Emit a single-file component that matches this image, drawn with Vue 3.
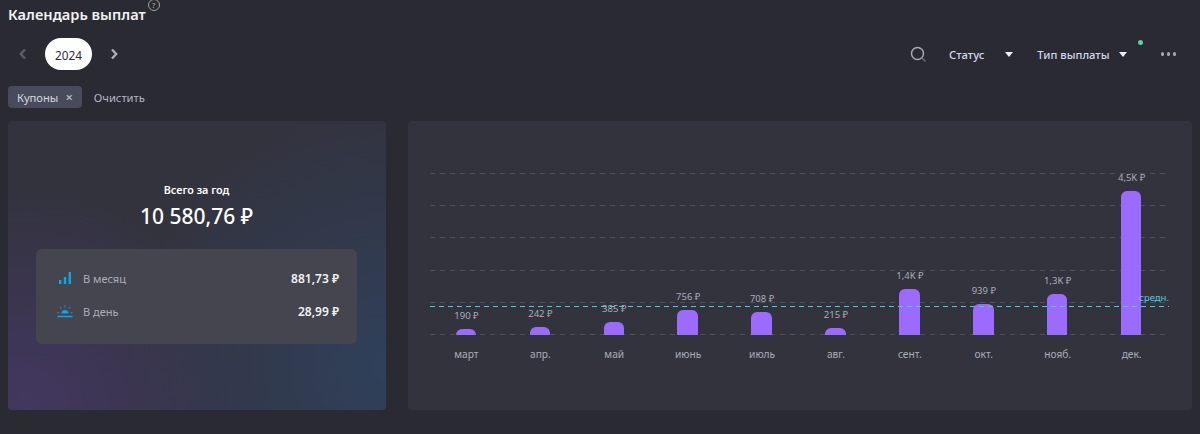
<template>
  <div class="page">
    <div class="title-row">
      <h1 class="title">Календарь выплат</h1>
      <span class="help">?</span>
    </div>

    <div class="toolbar">
      <div class="years">
        <svg class="chev" width="10" height="12" viewBox="0 0 10 12"><path d="M7 1.5 2.8 6 7 10.5" fill="none" stroke="#5b5e69" stroke-width="2.4"/></svg>
        <button class="year">2024</button>
        <svg class="chev" width="10" height="12" viewBox="0 0 10 12"><path d="M3 1.5 7.2 6 3 10.5" fill="none" stroke="#a9acb6" stroke-width="2.4"/></svg>
      </div>
      <div class="filters">
        <svg class="search" width="17" height="17" viewBox="0 0 17 17">
          <circle cx="7.5" cy="7.5" r="6" fill="none" stroke="#a8a9b0" stroke-width="1.5"/>
          <path d="M12 12 15.5 15.5" stroke="#6d6e77" stroke-width="1.5"/>
        </svg>
        <div class="filter status">Статус <i class="caret"></i></div>
        <div class="filter kind">Тип выплаты <i class="caret"></i><span class="dot"></span></div>
        <div class="more"><i></i><i></i><i></i></div>
      </div>
    </div>

    <div class="chips">
      <span class="chip">Купоны <span class="chip-x">×</span></span>
      <span class="clear">Очистить</span>
    </div>

    <div class="cards">
      <section class="card summary">
        <div class="sum-label">Всего за год</div>
        <div class="sum-value">10 580,76 ₽</div>
        <div class="stats">
          <div class="stat">
            <svg class="stat-icon" width="14" height="12" viewBox="0 0 14 12">
              <rect x="1" y="8" width="2.4" height="4" fill="#0ea5e9"/>
              <rect x="5.8" y="5" width="2.4" height="7" fill="#0ea5e9"/>
              <rect x="10.6" y="0" width="2.4" height="12" fill="#0ea5e9"/>
            </svg>
            <span class="stat-name">В месяц</span>
            <b class="stat-value">881,73 ₽</b>
          </div>
          <div class="stat">
            <svg class="stat-icon" width="16" height="14" viewBox="0 0 16 14">
              <path d="M4.5 9.5a3.5 3.5 0 0 1 7 0z" fill="#0ea5e9"/>
              <path d="M0.5 12.5h15" stroke="#0ea5e9" stroke-width="1.6"/>
              <path d="M8 1v2.4M3 3l1.4 1.6M13 3l-1.4 1.6M.5 8.6h2M13.5 8.6h2" stroke="#2f7ba8" stroke-width="1.2"/>
            </svg>
            <span class="stat-name">В день</span>
            <b class="stat-value">28,99 ₽</b>
          </div>
        </div>
      </section>

      <section class="card chart-card">
        <div class="chart">
          <div class="lines">
            <i v-for="n in 6" :key="n"></i>
          </div>
          <div class="bars">
            <div class="col" v-for="m in months" :key="m.name">
              <span class="bar-label">{{ m.label }}</span>
              <div class="bar" :style="{ height: m.h + 'px' }"></div>
              <span class="month">{{ m.name }}</span>
            </div>
          </div>
          <div class="avg"><span>средн.</span></div>
        </div>
      </section>
    </div>
  </div>
</template>

<script setup>
const months = [
  { name: 'март', label: '190 ₽', h: 6.5 },
  { name: 'апр.', label: '242 ₽', h: 8 },
  { name: 'май', label: '385 ₽', h: 13 },
  { name: 'июнь', label: '756 ₽', h: 25 },
  { name: 'июль', label: '708 ₽', h: 23 },
  { name: 'авг.', label: '215 ₽', h: 7 },
  { name: 'сент.', label: '1,4K ₽', h: 46 },
  { name: 'окт.', label: '939 ₽', h: 31 },
  { name: 'нояб.', label: '1,3K ₽', h: 41 },
  { name: 'дек.', label: '4,5K ₽', h: 144 }
]
</script>

<style>
html, body { background: #2a2a33; }
</style>

<style scoped>
.page {
  height: 434px;
  padding: 0 8px;
  box-sizing: border-box;
  overflow: hidden;
  background: #2a2a33;
  color: #fff;
  font-family: "Noto Sans", "DejaVu Sans", sans-serif;
}
.title-row {
  display: flex;
  height: 29px;
  align-items: flex-start;
}
.title {
  margin: 3px 0 0;
  font-size: 14.6px;
  line-height: 22px;
  font-weight: 600;
  color: #f1f1f3;
}
.help {
  margin: -1px 0 0 2px;
  width: 10px;
  height: 10px;
  border: 1px solid #a0a1a8;
  border-radius: 50%;
  font-size: 7.5px;
  line-height: 10px;
  text-align: center;
  color: #b4b5bb;
}
.toolbar {
  display: flex;
  justify-content: space-between;
  align-items: center;
  height: 32px;
  margin-top: 9px;
}
.years {
  display: flex;
  align-items: center;
  padding-left: 10px;
}
.year {
  width: 47px;
  height: 32px;
  padding: 1px 0 0;
  margin: 0 17px 0 17px;
  border: 0;
  border-radius: 16px;
  background: #fff;
  color: #2c2c35;
  font-family: inherit;
  font-size: 11.8px;
}
.filters {
  display: flex;
  align-items: center;
  font-size: 11.2px;
  font-weight: 500;
  color: #d3d9ea;
}
.search { margin-right: 22px; }
.filter {
  position: relative;
  display: flex;
  align-items: center;
}
.status { gap: 21px; margin-right: 24px; }
.kind { gap: 9px; margin-right: 34px; }
.caret {
  width: 0;
  height: 0;
  border-left: 4px solid transparent;
  border-right: 4px solid transparent;
  border-top: 5px solid #f0f0f2;
}
.dot {
  position: absolute;
  right: -16px;
  top: -7px;
  width: 5px;
  height: 5px;
  border-radius: 50%;
  background: #4fd6a0;
}
.more {
  display: flex;
  gap: 2.5px;
  margin-right: 16px;
}
.more i {
  width: 3.5px;
  height: 3.5px;
  border-radius: 50%;
  background: #a4a6b0;
}
.chips {
  display: flex;
  align-items: center;
  gap: 12px;
  margin-top: 16px;
  font-size: 11.2px;
}
.chip {
  display: flex;
  align-items: center;
  gap: 7px;
  height: 22px;
  padding: 0 9px 0 9px;
  border-radius: 4px;
  background: #474b5a;
  color: #d6d8e0;
}
.chip-x {
  font-size: 13px;
  line-height: 1;
  font-weight: 600;
  color: #b9bbc4;
}
.clear { color: #b5b7c0; }
.cards {
  display: flex;
  gap: 22px;
  margin-top: 13px;
}
.card {
  height: 289px;
  box-sizing: border-box;
  border-radius: 4px;
  background: #33333e;
}
.summary {
  width: 378px;
  padding: 61px 29px 0 28px;
  text-align: center;
  background:
    radial-gradient(circle at 5% 100%, rgba(82, 60, 130, 0.5), rgba(82, 60, 130, 0) 48%),
    radial-gradient(circle at 100% 85%, rgba(45, 75, 115, 0.55), rgba(45, 75, 115, 0) 58%),
    #33333e;
}
.sum-label {
  font-size: 10.8px;
  line-height: 16px;
  font-weight: 600;
}
.sum-value {
  margin-top: 3px;
  font-size: 21px;
  line-height: 30px;
  font-weight: 500;
}
.stats {
  display: flex;
  flex-direction: column;
  gap: 11px;
  height: 95px;
  box-sizing: border-box;
  margin-top: 18px;
  padding: 18px 18px 0 21px;
  border-radius: 6px;
  background: #44454f;
}
.stat {
  display: flex;
  align-items: center;
  height: 22px;
  font-size: 11px;
}
.stat-icon { width: 16px; margin-right: 10px; }
.stat-name { color: #a9adb8; }
.stat-value {
  margin-left: auto;
  font-size: 12px;
  font-weight: 600;
  color: #f2f2f4;
}
.chart-card {
  flex: 1;
  padding: 52px 23px 0 22px;
}
.chart {
  position: relative;
  height: 200px;
}
.lines {
  position: absolute;
  left: 0;
  right: 0;
  top: 0;
  height: 162px;
  display: flex;
  flex-direction: column;
  justify-content: space-between;
}
.lines i {
  display: block;
  height: 1px;
  background: repeating-linear-gradient(90deg, #4f4f5a 0 5px, transparent 5px 10px);
}
.avg {
  position: absolute;
  left: 0;
  right: 0;
  top: 133px;
  height: 1px;
  background: repeating-linear-gradient(90deg, #3cd0dc 0 5px, transparent 5px 9px);
}
.avg span {
  position: absolute;
  right: 0;
  bottom: 2px;
  font-size: 9.5px;
  line-height: 14px;
  color: #4ccde0;
}
.bars {
  position: relative;
  display: flex;
  align-items: flex-end;
  height: 162px;
  margin: 0 1px 0 -1px;
}
.col {
  position: relative;
  flex: 1;
  display: flex;
  flex-direction: column;
  align-items: center;
}
.bar {
  width: 20.5px;
  border-radius: 6px 6px 0 0;
  background: #9b6bff;
}
.bar-label {
  margin: 0 0 6px 1px;
  font-size: 9.5px;
  line-height: 14px;
  color: #a9adb8;
}
.month {
  position: absolute;
  top: 100%;
  margin: 12px 0 0 1px;
  font-size: 10.2px;
  line-height: 14px;
  color: #a9adb8;
}
</style>
